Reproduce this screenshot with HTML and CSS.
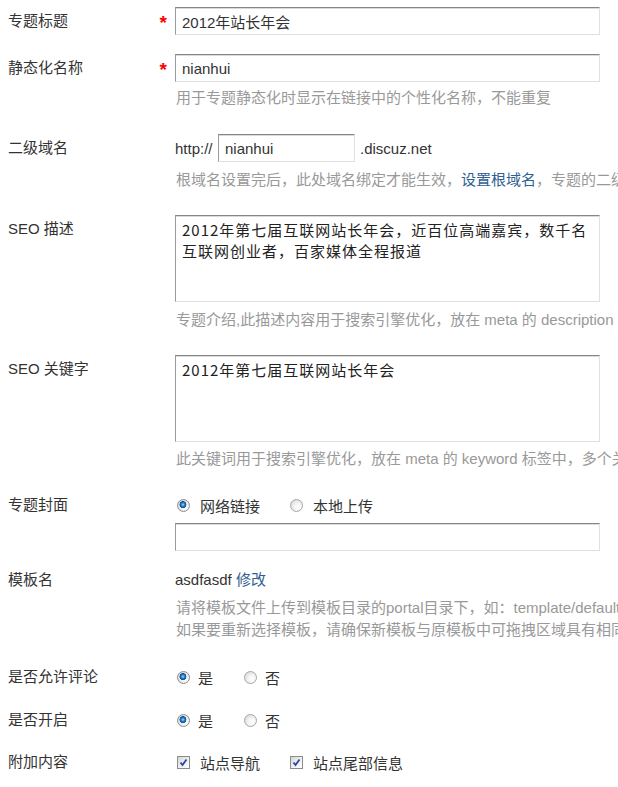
FILE: index.html
```html
<!DOCTYPE html>
<html lang="zh-CN">
<head>
<meta charset="utf-8">
<title>专题设置</title>
<link rel="stylesheet" href="styles.css">
</head>
<body>
<div class="form">
  <div class="row r-title">
    <div class="label">专题标题<span class="req">*</span></div>
    <div class="field"><input class="txt" type="text" value="2012年站长年会"></div>
  </div>

  <div class="row r-static">
    <div class="label">静态化名称<span class="req">*</span></div>
    <div class="field">
      <input class="txt" type="text" value="nianhui">
      <div class="hint hint-5">用于专题静态化时显示在链接中的个性化名称，不能重复</div>
    </div>
  </div>

  <div class="row r-domain">
    <div class="label">二级域名</div>
    <div class="field">
      <div class="domain">
        <span class="proto">http://</span>
        <input class="txt short" type="text" value="nianhui">
        <span class="suffix">.discuz.net</span>
      </div>
      <div class="hint hint-7">根域名设置完后，此处域名绑定才能生效，<a href="#">设置根域名</a>，专题的二级域名</div>
    </div>
  </div>

  <div class="row r-desc">
    <div class="label">SEO 描述</div>
    <div class="field">
      <textarea class="area">2012年第七届互联网站长年会，近百位高端嘉宾，数千名互联网创业者，百家媒体全程报道</textarea>
      <div class="hint hint-7">专题介绍,此描述内容用于搜索引擎优化，放在 meta 的 description</div>
    </div>
  </div>

  <div class="row r-keys">
    <div class="label">SEO 关键字</div>
    <div class="field">
      <textarea class="area">2012年第七届互联网站长年会</textarea>
      <div class="hint hint-6">此关键词用于搜索引擎优化，放在 meta 的 keyword 标签中，多个关</div>
    </div>
  </div>

  <div class="row r-cover opt-row">
    <div class="label">专题封面</div>
    <div class="field">
      <div class="opts">
        <label class="opt"><input class="radio" type="radio" name="cover" checked>网络链接</label>
        <label class="opt"><input class="radio" type="radio" name="cover">本地上传</label>
      </div>
      <input class="txt cover" type="text" value="">
    </div>
  </div>

  <div class="row r-tpl opt-row">
    <div class="label">模板名</div>
    <div class="field">
      <div class="line">asdfasdf <a href="#">修改</a></div>
      <div class="hint hint-6">请将模板文件上传到模板目录的portal目录下，如：template/default<br>如果要重新选择模板，请确保新模板与原模板中可拖拽区域具有相同</div>
    </div>
  </div>

  <div class="row r-comment opt-row">
    <div class="label">是否允许评论</div>
    <div class="field">
      <div class="opts">
        <label class="opt yn"><input class="radio" type="radio" name="comment" checked>是</label>
        <label class="opt yn"><input class="radio" type="radio" name="comment">否</label>
      </div>
    </div>
  </div>

  <div class="row r-open opt-row">
    <div class="label">是否开启</div>
    <div class="field">
      <div class="opts">
        <label class="opt yn"><input class="radio" type="radio" name="open" checked>是</label>
        <label class="opt yn"><input class="radio" type="radio" name="open">否</label>
      </div>
    </div>
  </div>

  <div class="row r-extra opt-row">
    <div class="label">附加内容</div>
    <div class="field">
      <div class="opts">
        <label class="opt"><span class="check"><svg width="11" height="11" viewBox="0 0 11 11"><path d="M2.5 5.5 L4.5 8 L8.5 2.5" fill="none" stroke="#2a47a4" stroke-width="1.8"/></svg></span>站点导航</label>
        <label class="opt"><span class="check"><svg width="11" height="11" viewBox="0 0 11 11"><path d="M2.5 5.5 L4.5 8 L8.5 2.5" fill="none" stroke="#2a47a4" stroke-width="1.8"/></svg></span>站点尾部信息</label>
      </div>
    </div>
  </div>
</div>
</body>
</html>
```

FILE: styles.css
```css
html, body {
  margin: 0;
  padding: 0;
  overflow: hidden;
  background: #fff;
}

body {
  font-family: "Liberation Sans", "Noto Sans CJK SC", sans-serif;
  font-size: 15px;
  color: #333;
}

a {
  color: #2f5f93;
  text-decoration: none;
}

.form {
  width: 618px;
  padding: 7px 0 0 8px;
  box-sizing: border-box;
}

.row {
  display: grid;
  grid-template-columns: 167px 1fr;
  align-items: start;
}

.label {
  display: flex;
  justify-content: space-between;
  line-height: 28px;
  height: 28px;
  white-space: nowrap;
}

.req {
  color: #f00;
  font-size: 19px;
  font-weight: bold;
  margin-right: 8px;
  line-height: 32px;
}

.field {
  min-width: 0;
  white-space: nowrap;
}

.txt {
  display: block;
  width: 425px;
  height: 28px;
  box-sizing: border-box;
  margin: 0;
  padding: 0 6px;
  border: 1px solid;
  border-color: #868686 #e0e0e0 #e0e0e0 #9a9a9a;
  box-shadow: inset 0 1px 0 #dadada;
  background: #fff;
  font: inherit;
  color: #333;
  outline: none;
}

.txt.short {
  width: 137px;
  display: inline-block;
}

.domain {
  display: flex;
  align-items: center;
  height: 28px;
}

.proto {
  width: 43px;
}

.suffix {
  margin-left: 5px;
}

.area {
  display: block;
  width: 425px;
  height: 87px;
  box-sizing: border-box;
  margin: 0;
  padding: 3px 6px;
  border: 1px solid;
  border-color: #868686 #e0e0e0 #e0e0e0 #9a9a9a;
  box-shadow: inset 0 1px 0 #dadada;
  font-family: "Noto Sans CJK SC", "Liberation Sans", sans-serif;
  font-size: 15px;
  line-height: 21px;
  letter-spacing: 1px;
  color: #222;
  resize: none;
  overflow: hidden;
  outline: none;
}

.hint {
  color: #999;
  line-height: 22px;
  padding-left: 1px;
}

.hint-5 { margin-top: 5px; }
.hint-6 { margin-top: 6px; }
.hint-7 { margin-top: 7px; }

.r-static { margin-top: 19px; }
.r-domain { margin-top: 25px; }
.r-desc { margin-top: 24px; }
.r-keys { margin-top: 24px; }
.r-cover { margin-top: 24px; }
.r-tpl { margin-top: 18px; }
.r-comment { margin-top: 25px; }
.r-open { margin-top: 21px; }
.r-extra { margin-top: 20px; }

.opt-row .label {
  line-height: 22px;
  height: 22px;
}

.line {
  line-height: 22px;
}

.opts {
  display: flex;
  align-items: center;
  height: 22px;
}

.opt {
  display: flex;
  align-items: center;
  margin-right: 28px;
}

.opt.yn {
  margin-right: 29px;
}

.yn .radio {
  margin-right: 8px;
}

.radio {
  -webkit-appearance: none;
  appearance: none;
  width: 13px;
  height: 13px;
  margin: 0 10px 0 2px;
  box-sizing: border-box;
  border-radius: 50%;
  border: 1px solid #a6a6a6;
  background: radial-gradient(circle at 65% 65%, #ffffff 0, #f3f3f3 40%, #d2d2d2 100%);
}

.radio:checked {
  border-color: #8e8e8e;
  background:
    radial-gradient(circle at 45% 42%, #a6dcff 0, #2f86d0 1.6px, #0d4c8e 3.2px, rgba(13,76,142,0) 3.7px),
    radial-gradient(circle at 65% 65%, #ffffff 0, #eeeeee 40%, #cfcfcf 100%);
}

.cover {
  margin-top: 7px;
}

.check {
  display: inline-flex;
  align-items: center;
  justify-content: center;
  width: 13px;
  height: 13px;
  margin: 0 10px 0 2px;
  box-sizing: border-box;
  border: 1px solid #8c8c8c;
  background: linear-gradient(135deg, #d6d6d6 0, #eeeeee 50%, #ffffff 100%);
}
```
